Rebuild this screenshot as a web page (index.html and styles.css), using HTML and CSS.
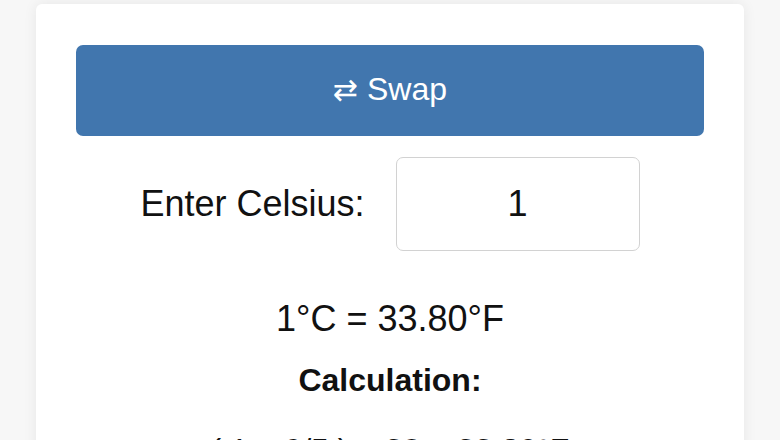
FILE: index.html
```html
<!DOCTYPE html>
<html lang="en">
<head>
    <meta charset="UTF-8">
    <meta name="viewport" content="width=device-width, initial-scale=1.0">
    <title>Temperature Converter</title>
    <link rel="stylesheet" href="styles.css">
</head>
<body>
    <div class="converter">
        <button class="swap-btn" type="button"><span class="swap-icon">⇄</span> Swap</button>
        <div class="input-row">
            <label class="input-label" for="temp">Enter Celsius:</label>
            <input class="temp-input" id="temp" type="text" value="1">
        </div>
        <p class="result">1°C = 33.80°F</p>
        <h3 class="calc-title">Calculation:</h3>
        <p class="calc">( 1 × 9/5 ) + 32 = 33.80°F</p>
    </div>
</body>
</html>
```

FILE: styles.css
```css
body{
    margin: 0;
    padding-top: 4px;
    background: #f7f7f7;
    font-family: "Liberation Sans", Arial, "DejaVu Sans", sans-serif;
    color: #111;
}
.converter{
    width: 628px;
    margin: 0 auto;
    padding: 41px 40px 40px;
    background: #fff;
    border-radius: 6px;
    box-shadow: 0 0 14px rgba(0, 0, 0, 0.07);
    text-align: center;
}
.swap-btn{
    display: block;
    width: 100%;
    padding: 26px 0 28px;
    border: none;
    border-radius: 7px;
    background: #4176ae;
    color: #fff;
    font-family: inherit;
    font-size: 32px;
    line-height: 37px;
}
.swap-icon{
    font-family: "DejaVu Sans", sans-serif;
    font-size: 30px;
}
.input-row{
    display: flex;
    justify-content: center;
    align-items: center;
    gap: 31px;
    margin-top: 21px;
}
.input-label{
    font-size: 36px;
}
.temp-input{
    box-sizing: border-box;
    width: 244px;
    height: 94px;
    border: 1px solid #d2d2d2;
    border-radius: 7px;
    font-family: inherit;
    font-size: 36px;
    color: #111;
    text-align: center;
}
.result{
    margin: 47px 0 0;
    font-size: 36px;
}
.calc-title{
    margin: 22px 0 0;
    font-size: 32px;
}
.calc{
    margin: 33px 0 0;
    font-size: 32px;
}
```
